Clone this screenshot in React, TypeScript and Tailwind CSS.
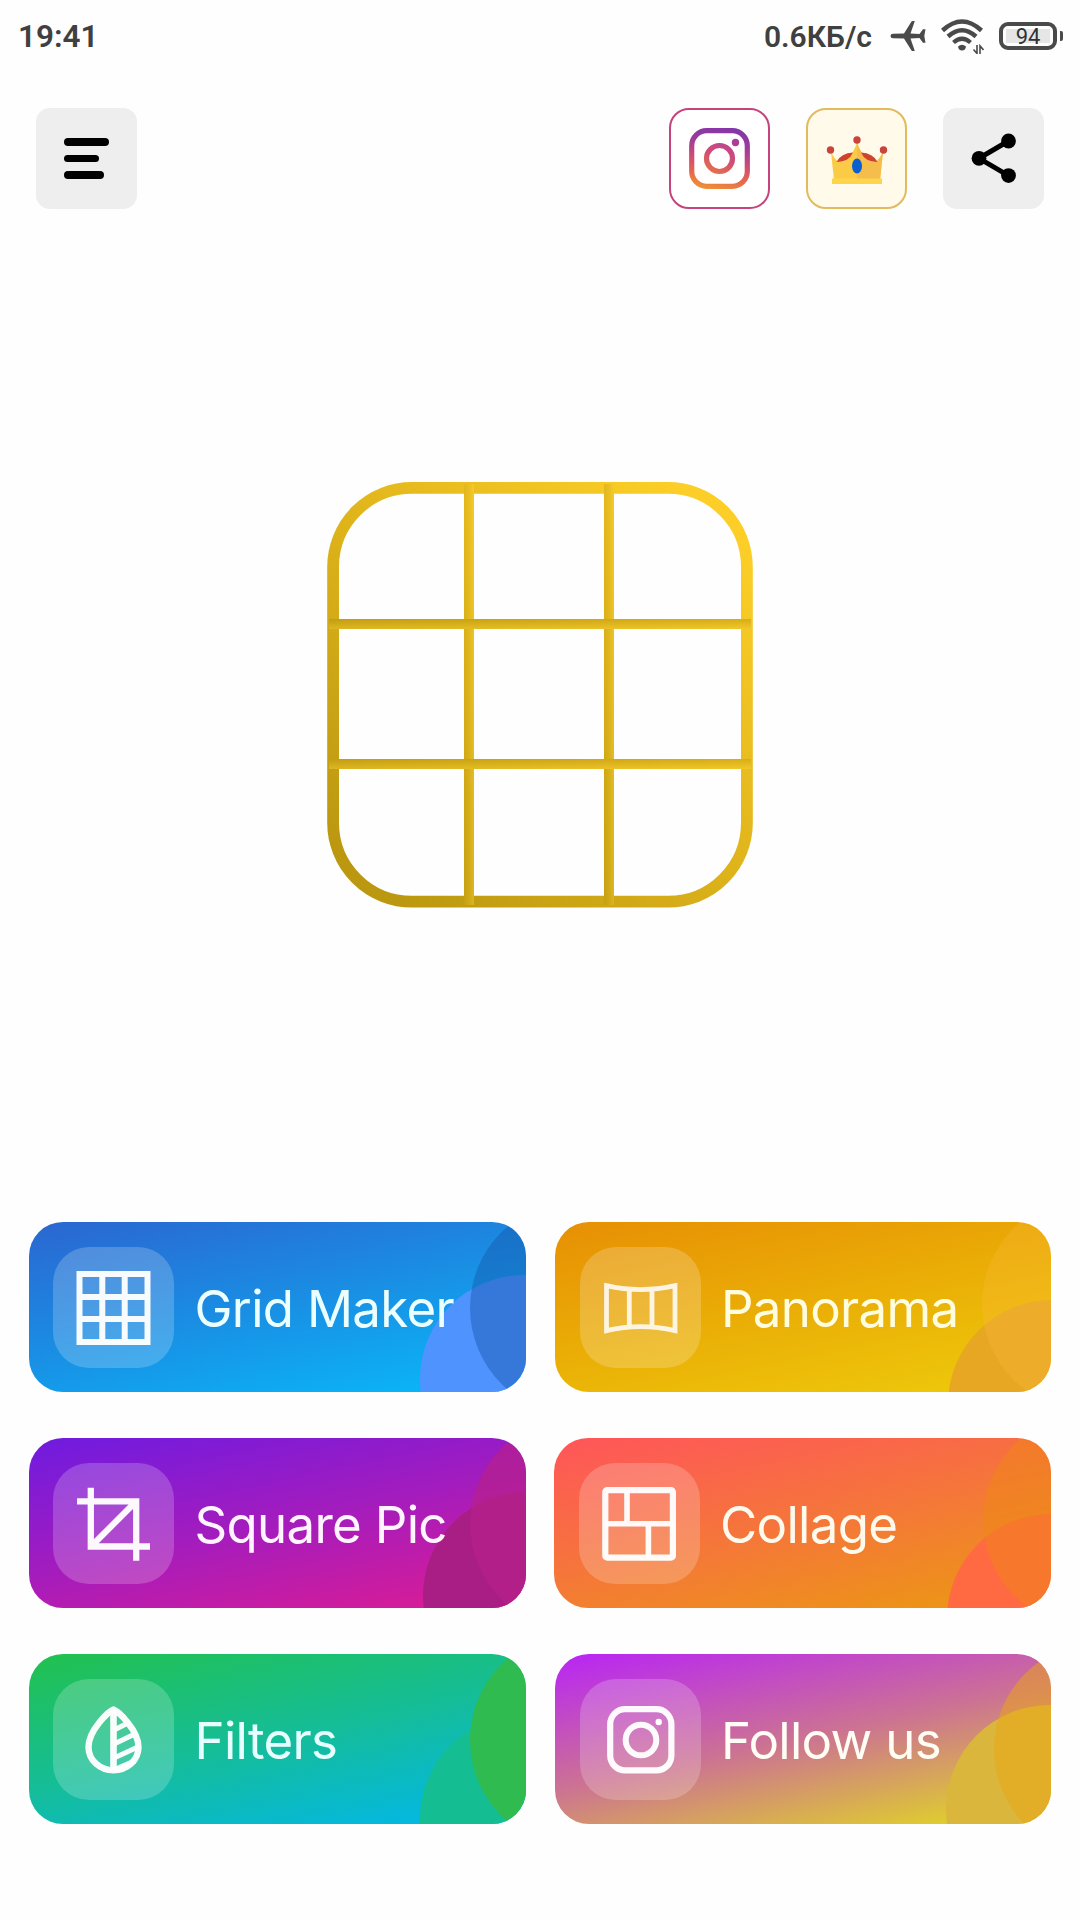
import React from "react";

function StatusBar() {
  return (
    <div className="flex h-[72px] items-center justify-between pl-[18px] pr-[17px] font-['Roboto'] font-semibold text-[#404040]">
      <span className="mt-[2px] text-[31.500px] leading-none tracking-[0px]">19:41</span>
      <div className="flex items-center">
        <span className="mr-[18px] mt-[1px] text-[30px] leading-none">0.6КБ/с</span>
        <svg className="mr-[15px] h-[32px] w-[36px]" viewBox="0 0 36 32" fill="#4a4a4a">
          <path d="M0.5 16Q0.5 13.7 3 13.7L14 13.5 21.500 1.500Q22 1 23 1H24.800L20.500 13.500 29.500 14 33 9.300H35.500L34.300 16 35.500 22.700H33L29.500 18 20.500 18.500 24.800 31H23Q22 31 21.500 30.500L14 18.500 3 18.300Q0.500 18.300 0.500 16Z" />
        </svg>
        <svg className="mr-[15px] h-[36px] w-[43px]" viewBox="0 0 43 36" fill="none" stroke="#4a4a4a">
          <path d="M1.500 12.500Q21 -5.500 40.500 12.500" strokeWidth="4.500" />
          <path d="M7 18.500Q21 6 35 18.500" strokeWidth="4.500" />
          <path d="M12.500 24.500Q21 17 29.500 24.500" strokeWidth="4.300" />
          <path d="M17 28.500Q21 25 25 28.500Q24.500 32.500 21 32.500Q17.500 32.500 17 28.500Z" fill="#4a4a4a" stroke="none" />
          <path d="M36 27V35.500L32.500 31.500M39 36V28L42.500 32" strokeWidth="1.600" />
        </svg>
        <div className="flex h-[28px] w-[58px] items-center rounded-[9px] border-[4px] border-[#4a4a4a] p-[3px]">
          <div className="flex h-full w-full items-center justify-center bg-[#e6e6e6] pt-[2px] text-[22px] font-normal leading-none text-[#333]">94</div>
        </div>
        <div className="ml-[3px] h-[10px] w-[3px] rounded-r-[2px] bg-[#4a4a4a]" />
      </div>
    </div>
  );
}

function Header() {
  return (
    <header className="mt-[36px] flex items-center justify-between px-[36px]">
      <button className="flex h-[101px] w-[101px] flex-col gap-[9px] rounded-[14px] bg-[#eeeeee] pl-[28px] pt-[30px]">
        <span className="h-[7.500px] w-[44.500px] rounded-full bg-black" />
        <span className="h-[7.500px] w-[34.500px] rounded-full bg-black" />
        <span className="h-[7.500px] w-[39.500px] rounded-full bg-black" />
      </button>
      <div className="flex gap-[36px]">
        <button className="flex h-[101px] w-[101px] items-center justify-center rounded-[20px] border-2 border-[#c5447c] bg-white">
          <svg className="h-[61px] w-[61px]" viewBox="0 0 61 61" fill="none">
            <defs>
              <linearGradient id="ig" gradientUnits="userSpaceOnUse" x1="38" y1="15" x2="24" y2="48">
                <stop offset="0" stopColor="#bb4590" />
                <stop offset="0.500" stopColor="#d5506e" />
                <stop offset="1" stopColor="#e87845" />
              </linearGradient>
              <linearGradient id="igFrame" gradientUnits="userSpaceOnUse" x1="34" y1="0" x2="22" y2="61">
                <stop offset="0" stopColor="#8436a8" />
                <stop offset="0.250" stopColor="#9c3c9c" />
                <stop offset="0.550" stopColor="#d24c74" />
                <stop offset="0.800" stopColor="#e8694a" />
                <stop offset="1" stopColor="#ee9038" />
              </linearGradient>
            </defs>
            <rect x="2.700" y="2.700" width="55.600" height="55.600" rx="15" stroke="url(#igFrame)" strokeWidth="5.200" />
            <circle cx="30.500" cy="30.500" r="13" stroke="url(#ig)" strokeWidth="5.200" />
            <circle cx="46.500" cy="14.500" r="3.700" fill="#a83e98" />
          </svg>
        </button>
        <button className="flex h-[101px] w-[101px] items-center justify-center rounded-[20px] border-2 border-[#e2bb5c] bg-[#fffaea]">
          <svg className="h-[62px] w-[62px]" viewBox="0 0 62 62">
            <path d="M5 24Q9 32 12 33.500Q18 36 24 28Q30 20 31 13Q32 20 38 28Q44 36 50 33.500Q53 32 57 24L54 52H8Z" fill="#fccb45" />
            <path d="M31 13Q32 20 38 28Q44 36 50 33.500Q53 32 57 24L54 52H31Z" fill="#f5bd4b" />
            <path d="M10.500 34Q15 25 27 24.500Q23 34 10.500 34Z" fill="#cf422c" />
            <path d="M51.500 34Q47 25 35 24.500Q39 34 51.500 34Z" fill="#cf422c" />
            <rect x="6" y="50.500" width="50" height="5.500" fill="#fdd54c" />
            <ellipse cx="31" cy="38" rx="5" ry="7.500" fill="#0a5fd0" />
            <circle cx="4.500" cy="22" r="3.700" fill="#c9443a" />
            <circle cx="31" cy="12" r="3.700" fill="#c9443a" />
            <circle cx="57.500" cy="22" r="3.700" fill="#c9443a" />
          </svg>
        </button>
        <button className="flex h-[101px] w-[101px] items-center justify-center rounded-[14px] bg-[#eeeeee]">
          <svg className="h-[101px] w-[101px]" viewBox="0 0 101 101">
            <path d="M65.500 33L36 50.300L65.500 67.600" fill="none" stroke="#000" strokeWidth="5" />
            <circle cx="65.500" cy="33" r="7.400" />
            <circle cx="36" cy="50.300" r="7.400" />
            <circle cx="65.500" cy="67.600" r="7.400" />
          </svg>
        </button>
      </div>
    </header>
  );
}

function Logo() {
  return (
    <svg className="mx-auto mt-[273px] h-[426px] w-[426px]" viewBox="0 0 426 426" fill="none">
      <defs>
        <linearGradient id="gold" x1="0.100" y1="0.950" x2="0.900" y2="0.050">
          <stop offset="0" stopColor="#bb9810" />
          <stop offset="0.500" stopColor="#dfb41b" />
          <stop offset="1" stopColor="#fcce27" />
        </linearGradient>
        <linearGradient id="barV" x1="0" y1="0" x2="0" y2="1">
          <stop offset="0" stopColor="#f2c524" />
          <stop offset="1" stopColor="#ceA716" />
        </linearGradient>
        <linearGradient id="barH" x1="0" y1="0" x2="1" y2="0">
          <stop offset="0" stopColor="#ceA817" />
          <stop offset="1" stopColor="#ecc022" />
        </linearGradient>
        <linearGradient id="shadeV" x1="0" y1="0" x2="1" y2="0">
          <stop offset="0" stopColor="#a88400" stopOpacity="0.200" />
          <stop offset="1" stopColor="#ffd83c" stopOpacity="0.300" />
        </linearGradient>
        <linearGradient id="shadeH" x1="0" y1="0" x2="0" y2="1">
          <stop offset="0" stopColor="#a88400" stopOpacity="0.300" />
          <stop offset="1" stopColor="#ffd83c" stopOpacity="0.300" />
        </linearGradient>
      </defs>
      <rect x="6.100" y="5.900" width="413.800" height="413.800" rx="79" stroke="url(#gold)" strokeWidth="11.800" />
      {[137, 277].map((x) => (
        <g key={x}>
          <rect x={x} y="2" width="10" height="421" fill="url(#barV)" />
          <rect x={x} y="2" width="10" height="421" fill="url(#shadeV)" />
        </g>
      ))}
      {[137, 277].map((y) => (
        <g key={y}>
          <rect x="2" y={y} width="422" height="10" fill="url(#barH)" />
          <rect x="2" y={y} width="422" height="10" fill="url(#shadeH)" />
        </g>
      ))}
    </svg>
  );
}

type Tile = {
  label: string;
  bg: string;
  lower: string;
  upper: string;
  tint: string;
  inset: string;
  icon: React.ReactNode;
};

const tiles: Tile[] = [
  {
    label: "Grid Maker",
    bg: "bg-[linear-gradient(168deg,#2b66d0_0%,#1b8be2_45%,#08bafa_100%)]",
    lower: "left-[391px] top-[53px] bg-[#4f93ff]",
    upper: "left-[441px] top-[-21px] bg-[rgba(20,86,170,0.440)]",
    tint: "text-[#ecffff]",
    inset: "pl-[24px]",
    icon: (
      <path d="M26.500 27H94.500V95H26.500ZM26.500 50H94.500M26.500 72H94.500M49.300 27V95M71.700 27V95" strokeWidth="6" />
    ),
  },
  {
    label: "Panorama",
    bg: "bg-[linear-gradient(168deg,#e78f04_0%,#eaae06_50%,#eecb0c_100%)]",
    lower: "left-[393px] top-[78px] bg-[#e8a723]",
    upper: "left-[427px] top-[-25px] bg-[rgba(255,187,67,0.250)]",
    tint: "text-[#fffde0]",
    inset: "pl-[25px]",
    icon: (
      <path d="M26.500 38.700Q60.700 46.500 95 38.700V83.700Q60.700 75.500 26.500 83.700ZM49.300 43V80M72 43V80" strokeWidth="4.800" strokeOpacity="0.850" />
    ),
  },
  {
    label: "Square Pic",
    bg: "bg-[linear-gradient(168deg,#6f1be0_0%,#a41cbd_50%,#df1c92_100%)]",
    lower: "left-[394px] top-[54px] bg-[#a81e84]",
    upper: "left-[441px] top-[-21px] bg-[rgba(182,31,140,0.700)]",
    tint: "text-[#fff4ff]",
    inset: "pl-[24px]",
    icon: (
      <path d="M37.800 24.700V83.500H97M24 38.400H83.200V97.700M39.500 82L82 39.500" strokeWidth="6.300" />
    ),
  },
  {
    label: "Collage",
    bg: "-ml-px bg-[linear-gradient(168deg,#ff555a_0%,#f5763a_50%,#eb9a10_100%)]",
    lower: "left-[393px] top-[76px] bg-[#ff6a42]",
    upper: "left-[429px] top-[-25px] bg-[rgba(237,138,18,0.450)]",
    tint: "text-[#fffaee]",
    inset: "pl-[25px]",
    icon: (
      <>
        <rect x="26.300" y="27.100" width="67.600" height="67.600" rx="2" strokeWidth="6.200" />
        <path d="M26 60.800H94M48 27V60.800M69.400 60.800V95" strokeWidth="5.600" />
      </>
    ),
  },
  {
    label: "Filters",
    bg: "bg-[linear-gradient(168deg,#22c14e_0%,#15bd99_50%,#00b7ef_100%)]",
    lower: "left-[391px] top-[61px] bg-[#15be92]",
    upper: "left-[441px] top-[-21px] bg-[#30bb50]",
    tint: "text-[#e8ffff]",
    inset: "pl-[24px]",
    icon: (
      <>
        <path d="M60.500 30.500C56 32 35.500 51 35.500 68C35.500 81.500 47 91.300 60.500 91.300S85.500 81.500 85.500 68C85.500 51 65 32 60.500 30.500Z" strokeWidth="6.400" strokeLinejoin="round" />
        <path d="M60.500 32V92" strokeWidth="6.600" />
        <path d="M61 51L77 43M61 65L84 54M61 79L86 67.500M61 91L82 82" strokeWidth="5.200" />
      </>
    ),
  },
  {
    label: "Follow us",
    bg: "bg-[linear-gradient(168deg,#b824f6_0%,#cc7392_50%,#e2de1c_100%)]",
    lower: "left-[391px] top-[51px] bg-[#dab63c]",
    upper: "left-[439px] top-[-12px] bg-[rgba(235,166,18,0.500)]",
    tint: "text-[#fffdf4]",
    inset: "pl-[25px]",
    icon: (
      <>
        <rect x="30.200" y="30.200" width="61.200" height="61.200" rx="15" strokeWidth="6.200" />
        <circle cx="61" cy="61" r="15.300" strokeWidth="6" />
        <circle cx="78.700" cy="43" r="3.200" fill="white" stroke="none" />
      </>
    ),
  },
];

function ToolTile({ tile }: { tile: Tile }) {
  return (
    <button className={`relative isolate flex h-[170px] items-center overflow-hidden rounded-[34px] ${tile.inset} ${tile.bg}`}>
      <span className={`absolute -z-10 h-[208px] w-[208px] rounded-full ${tile.lower}`} />
      <span className={`absolute -z-10 h-[214px] w-[214px] rounded-full ${tile.upper}`} />
      <span className="h-[121px] w-[121px] shrink-0 rounded-[36px] bg-white/20">
        <svg className="h-[121px] w-[121px]" viewBox="0 0 121 121" fill="none" stroke="#ffffff" strokeOpacity="0.960">
          {tile.icon}
        </svg>
      </span>
      <span className={`ml-[20.500px] mt-[2px] whitespace-nowrap text-[51px] leading-none tracking-[-0.700px] ${tile.tint}`}>
        {tile.label}
      </span>
    </button>
  );
}

export default function App() {
  return (
    <div className="flex h-[1920px] w-[1080px] flex-col overflow-hidden bg-[#fefefe] font-['Inter',sans-serif]">
      <StatusBar />
      <Header />
      <Logo />
      <main className="mt-[314px] grid grid-cols-2 gap-x-[29px] gap-y-[46px] px-[29px]">
        {tiles.map((tile) => (
          <ToolTile key={tile.label} tile={tile} />
        ))}
      </main>
    </div>
  );
}
